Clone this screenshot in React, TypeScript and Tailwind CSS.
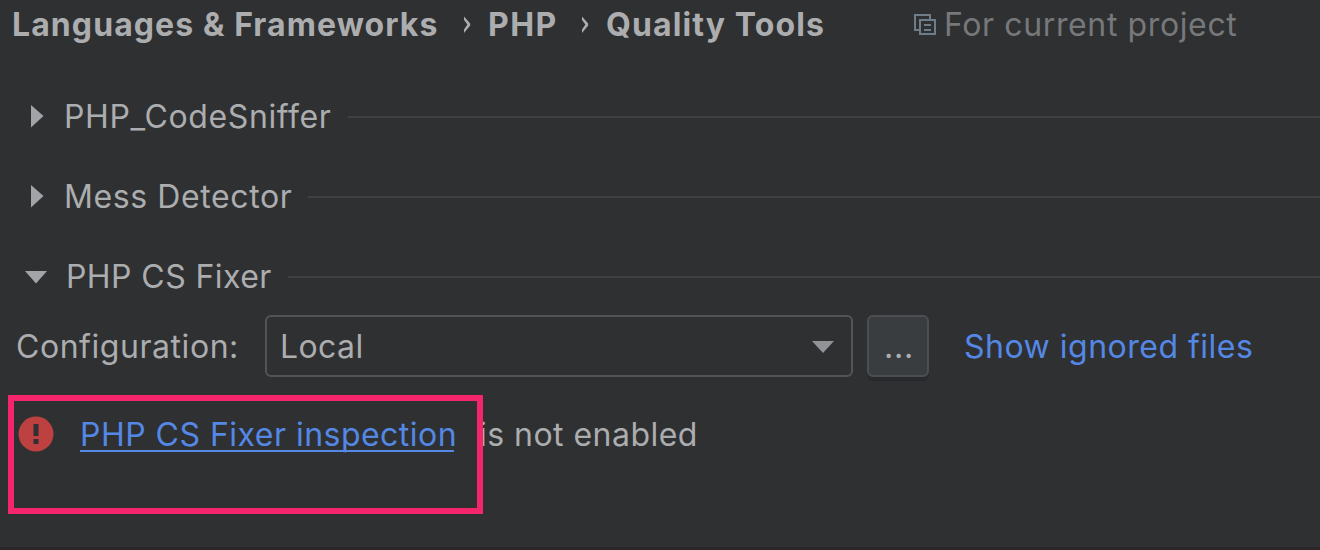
import React from "react";

type SectionProps = {
  title: string;
  open?: boolean;
  titleClass: string;
};

function Section({ title, open = false, titleClass }: SectionProps) {
  return (
    <div className="flex h-20 items-start">
      <svg className="h-10 w-12 shrink-0" viewBox="0 0 48 40" fill="#a3a4a8">
        {open ? <path d="M25 15H47L36 27.5Z" /> : <path d="M31 9V31.5L43.5 20Z" />}
      </svg>
      <h2 className={`shrink-0 whitespace-nowrap ${titleClass}`}>{title}</h2>
      <div className="mt-5 ml-4 h-0.5 grow bg-[#3f4143]" />
    </div>
  );
}

function Chevron({ className }: { className: string }) {
  return (
    <svg className={`h-10 w-2 shrink-0 ${className}`} viewBox="0 0 8 40" fill="#acadaf">
      <path d="M0 12.5L6.2 19.6V21.4L0 29V25.4L3.4 20.5L0 16Z" />
    </svg>
  );
}

function CopyIcon() {
  return (
    <svg className="mt-[9px] h-6 w-6 shrink-0" viewBox="0 0 24 24" fill="none" stroke="#6f7d88" strokeWidth="2">
      <path d="M6 17H2V2H17V6" />
      <path d="M7 7H22V21H7Z" />
      <path d="M11 12H18M11 17H18" />
    </svg>
  );
}

export default function App() {
  return (
    <main className="relative flex h-[550px] w-[1320px] flex-col overflow-hidden bg-[#2f3032] font-['Inter',sans-serif] text-[32px] leading-[42px] text-[#acadaf]">
      <nav className="flex h-[92px] items-start pt-1 pl-3 font-bold whitespace-nowrap">
        <span className="w-[426px] tracking-[1.08px]">Languages &amp; Frameworks</span>
        <Chevron className="ml-[26px]" />
        <span className="ml-4 w-[72px] tracking-[1.4px]">PHP</span>
        <Chevron className="ml-[22px]" />
        <span className="ml-4 w-[219px] tracking-[1.1px]">Quality Tools</span>
        <span className="ml-[88px] flex font-normal text-[#77787a]">
          <CopyIcon />
          <span className="ml-[7px] tracking-[0.62px]">For current project</span>
        </span>
      </nav>

      <div className="mt-1 flex flex-col">
        <Section title="PHP_CodeSniffer" titleClass="ml-4 w-[268px] tracking-[0.62px]" />
        <Section title="Mess Detector" titleClass="ml-4 w-[228px] tracking-[0.6px]" />
        <Section title="PHP CS Fixer" open titleClass="ml-[18px] w-[206px] tracking-[0.42px]" />
      </div>

      <div className="-mt-[21px] flex h-[62px] items-center pl-4 whitespace-nowrap">
        <label className="w-[249px] pt-px tracking-[0.55px]">Configuration:</label>
        <button className="flex h-[62px] w-[588px] items-center justify-between rounded-md border-2 border-[#525456] pr-[17px] pl-[13px]">
          <span className="pt-px tracking-[0.4px]">Local</span>
          <svg className="mt-0.5 h-3 w-[22px]" viewBox="0 0 22 12" fill="#929397">
            <path d="M0 0H22L11 12Z" />
          </svg>
        </button>
        <button className="ml-3.5 flex h-[62px] w-[62px] items-center justify-center rounded-md border-2 border-[#4c4e51] bg-[#3a3d40] shadow-[0_4px_1px_#292a2d]">
          <span className="pt-px pl-0.5 tracking-[0.8px]">...</span>
        </button>
        <a className="ml-[35px] pt-px tracking-[0.5px] text-[#5488e4]">Show ignored files</a>
      </div>

      <div className="mt-[37px] flex h-10 items-start pl-[18px] whitespace-nowrap">
        <svg className="mt-0.5 h-9 w-9 shrink-0" viewBox="0 0 36 36">
          <circle cx="18" cy="18" r="17.5" fill="#bd4140" />
          <path d="M15.5 8H20.5V20H15.5ZM15.5 23H20.5V28H15.5Z" fill="#2f3032" />
        </svg>
        <a className="ml-[26px] h-[38px] w-[374px] border-b-2 border-[#5488e4] tracking-[0.48px] text-[#5488e4]">
          PHP CS Fixer inspection
        </a>
        <span className="ml-[25px] tracking-[0.47px]">is not enabled</span>
      </div>

      <div className="absolute top-[395px] left-2 h-[119px] w-[475px] border-6 border-[#f5256b]" />
      <div className="mt-auto h-[3px] bg-[#2b2628]" />
    </main>
  );
}
